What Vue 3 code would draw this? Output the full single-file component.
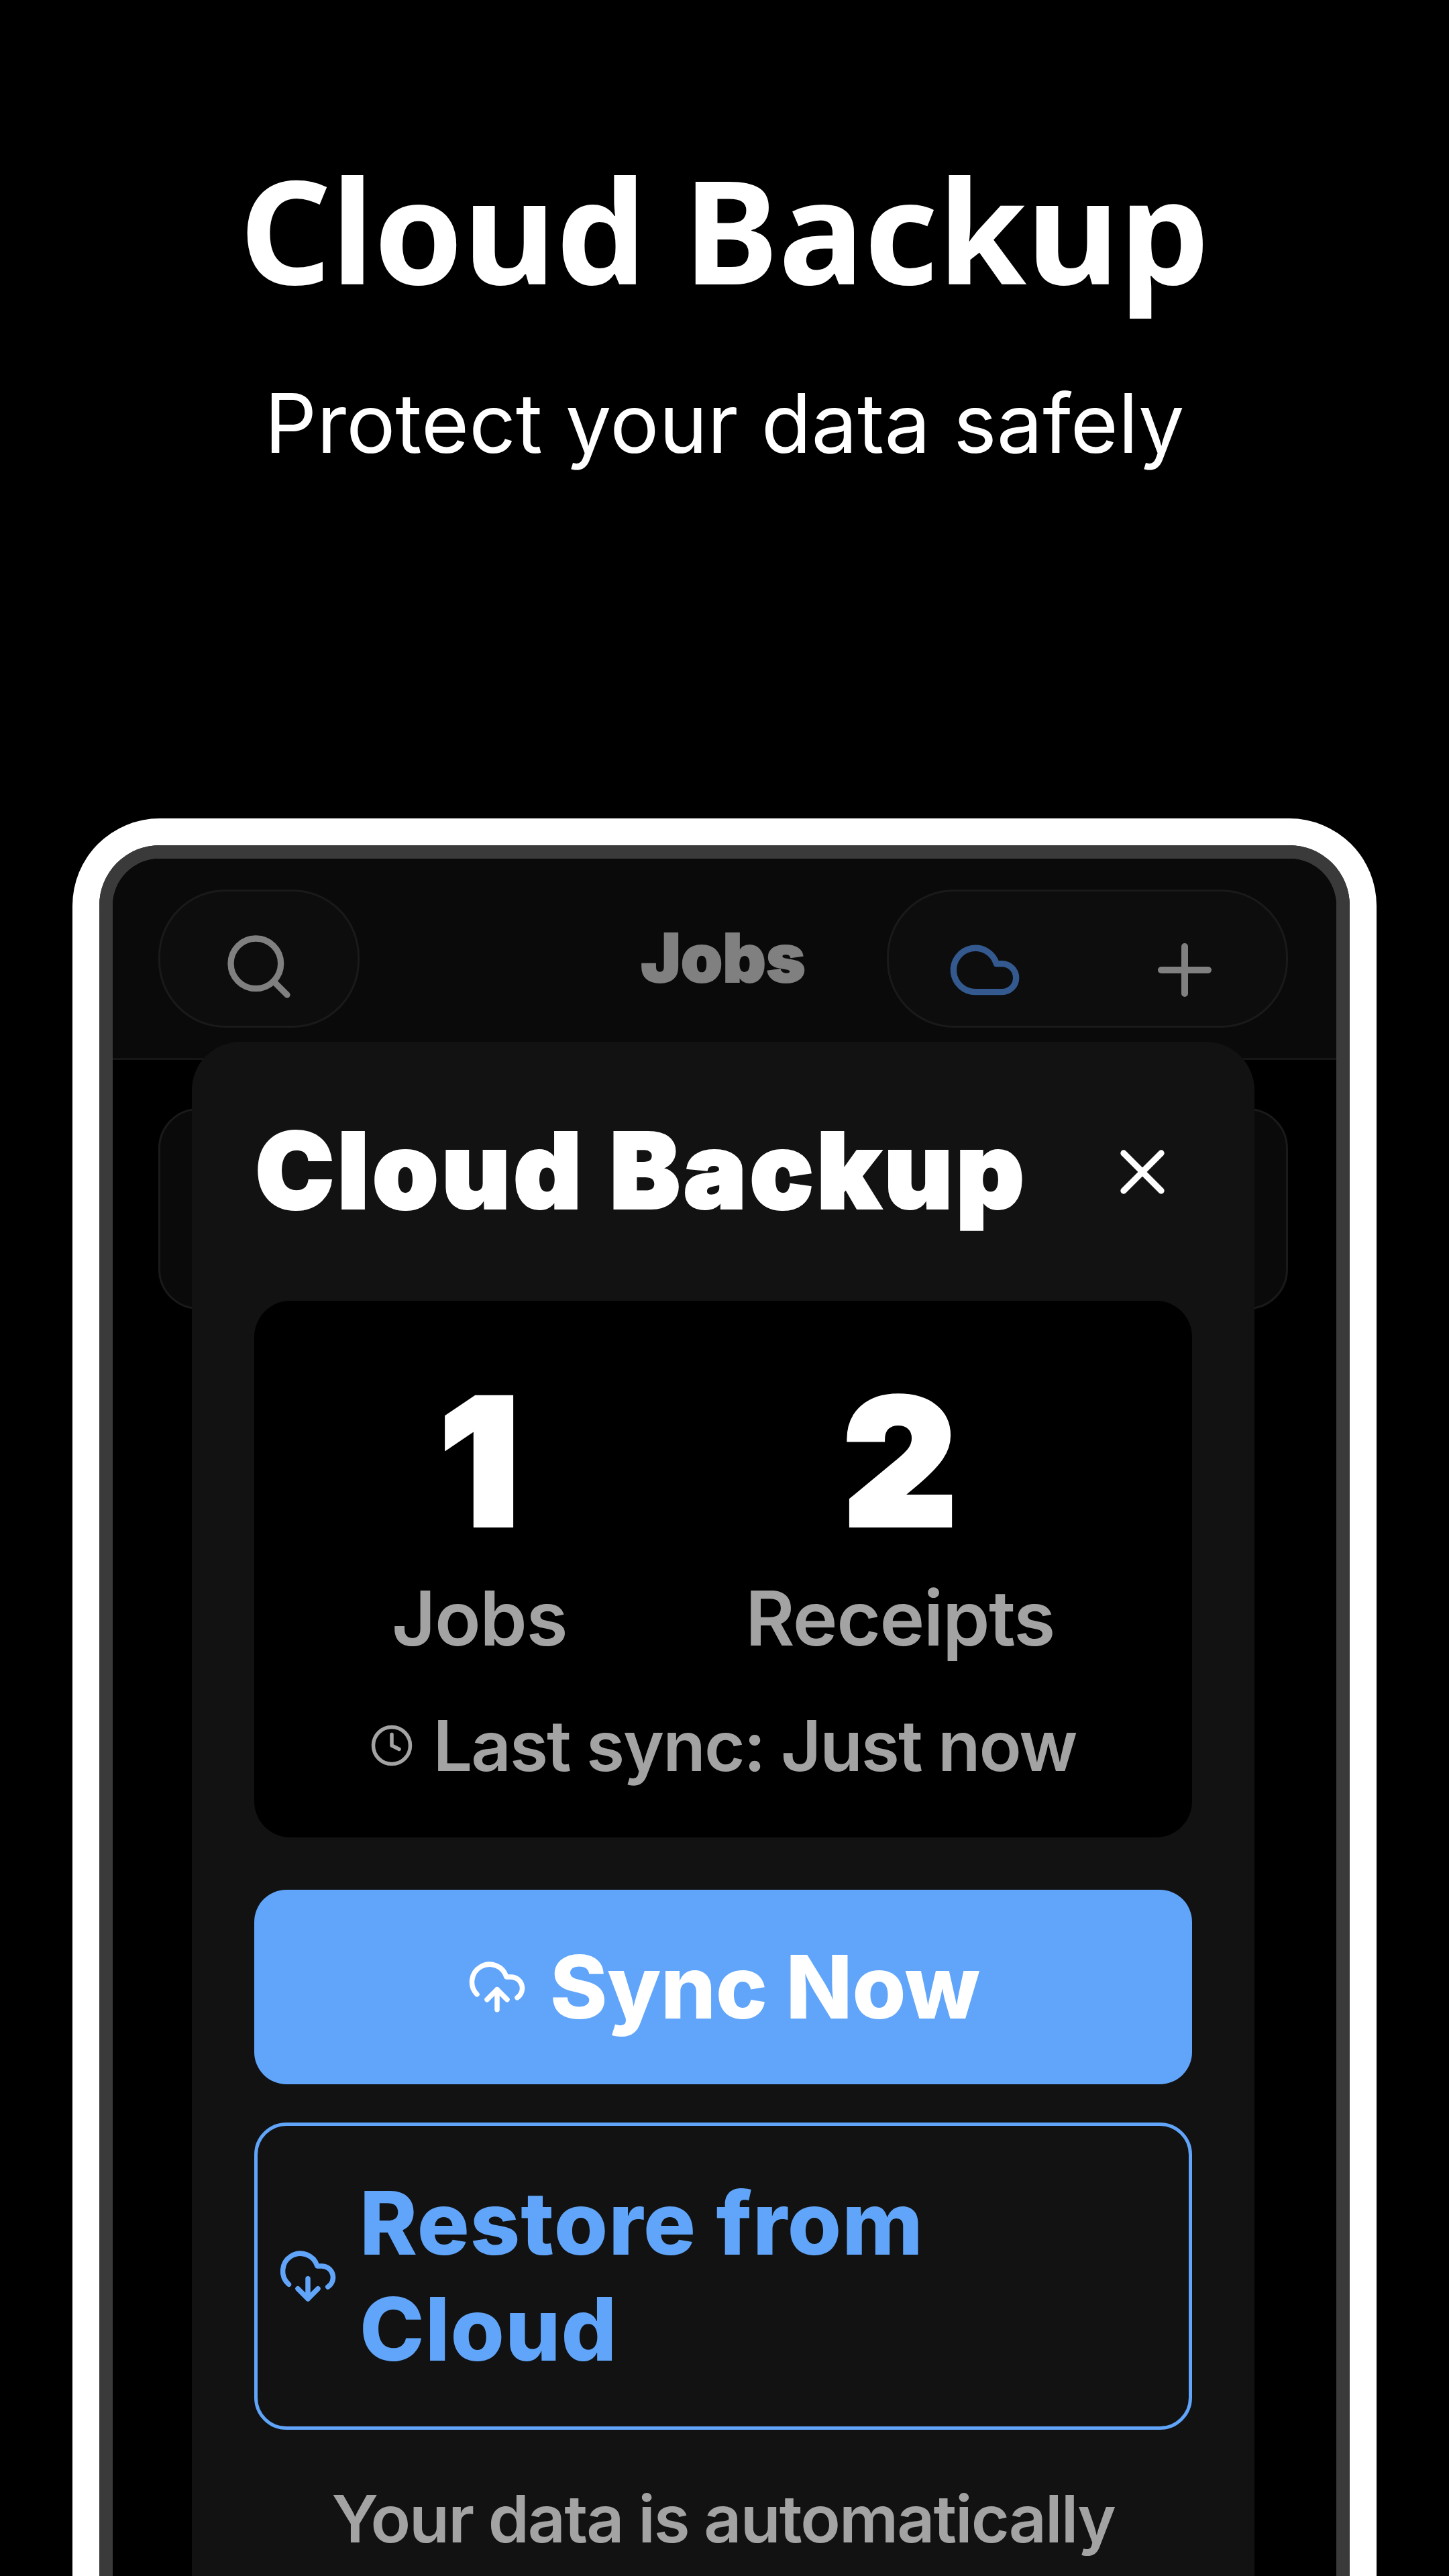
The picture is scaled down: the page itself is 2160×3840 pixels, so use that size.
<script setup>
const stats = [
  { value: 1, label: 'Jobs' },
  { value: 2, label: 'Receipts' },
]
</script>

<template>
  <main class="page">
    <header class="hero">
      <h1 class="hero-title">Cloud Backup</h1>
      <p class="hero-sub">Protect your data safely</p>
    </header>

    <section class="frame">
      <div class="screen">
        <div class="app-bar">
          <button class="round search">
            <svg class="i112" viewBox="0 0 24 24"><path d="m21 21-4.34-4.34"/><circle cx="11" cy="11" r="8"/></svg>
          </button>
          <span class="app-title">Jobs</span>
          <div class="round actions">
            <svg class="i112 cloud" viewBox="0 0 24 24"><path d="M17.5 19H9a7 7 0 1 1 6.71-9h1.79a4.5 4.5 0 1 1 0 9Z"/></svg>
            <svg class="i120" viewBox="0 0 24 24"><path d="M5 12h14"/><path d="M12 5v14"/></svg>
          </div>
        </div>
        <div class="list">
          <div class="job-card"></div>
        </div>

        <div class="modal">
          <div class="modal-head">
            <h2 class="modal-title">Cloud Backup</h2>
            <svg class="i112 close" viewBox="0 0 24 24"><path d="M18 6 6 18"/><path d="m6 6 12 12"/></svg>
          </div>

          <div class="stats">
            <div class="stat-row">
              <div v-for="s in stats" :key="s.label" class="stat">
                <div class="stat-value">{{ s.value }}</div>
                <div class="stat-label">{{ s.label }}</div>
              </div>
            </div>
            <div class="last-sync">
              <svg class="clock" viewBox="0 0 24 24"><circle cx="12" cy="12" r="10"/><path d="M12 6v6l4 2"/></svg>
              <span>Last sync: Just now</span>
            </div>
          </div>

          <button class="btn primary">
            <svg class="btn-icon" viewBox="0 0 24 24"><path d="M12 13v8"/><path d="M4 14.899A7 7 0 1 1 15.71 8h1.79a4.5 4.5 0 0 1 2.5 8.242"/><path d="m8 17 4-4 4 4"/></svg>
            <span>Sync Now</span>
          </button>

          <button class="btn outline">
            <svg class="btn-icon" viewBox="0 0 24 24"><path d="M12 13v8l-4-4"/><path d="m12 21 4-4"/><path d="M4.393 15.269A7 7 0 1 1 15.71 8h1.79a4.5 4.5 0 0 1 2.436 8.284"/></svg>
            <span class="outline-text">Restore from Cloud</span>
          </button>

          <p class="note">Your data is automatically backed up to the cloud</p>
        </div>
      </div>
    </section>
  </main>
</template>

<style scoped>
.page {
  width: 2160px;
  height: 3840px;
  background: #000;
  overflow: hidden;
  font-family: Inter, "Liberation Sans", sans-serif;
  color: #fff;
}
.hero {
  padding-top: 211px;
  text-align: center;
}
.hero-title {
  margin: 0;
  font-family: "Noto Sans", sans-serif;
  font-weight: 700;
  font-size: 213px;
  line-height: 260px;
}
.hero-sub {
  margin: 87px 0 0;
  font-size: 122px;
  line-height: 146px;
  font-weight: 400;
}
.frame {
  width: 1944px;
  height: 2620px;
  margin: 516px auto 0;
  box-sizing: border-box;
  border: 40px solid #fff;
  border-bottom: 0;
  border-radius: 130px 130px 0 0;
}
.screen {
  position: relative;
  height: 100%;
  box-sizing: border-box;
  border: 20px solid #3a3a3a;
  border-bottom: 0;
  border-radius: 90px 90px 0 0;
  background: #000;
  overflow: hidden;
}
svg {
  display: block;
  fill: none;
  stroke: currentColor;
  stroke-width: 2;
  stroke-linecap: round;
  stroke-linejoin: round;
  flex: none;
}
.i112 { width: 112px; height: 112px; }
.i120 { width: 120px; height: 120px; }
.app-bar {
  height: 300px;
  box-sizing: border-box;
  padding: 46px 72px 0 68px;
  display: grid;
  grid-template-columns: 1fr auto 1fr;
  align-items: start;
  background: #0a0a0a;
  border-bottom: 3px solid #161616;
  color: #808080;
}
.round {
  height: 206px;
  box-sizing: border-box;
  border: 3px solid #1a1a1a;
  border-radius: 100px;
  background: #0d0d0d;
  padding: 0;
  color: inherit;
}
.search {
  width: 300px;
  display: flex;
  align-items: center;
  justify-content: center;
  padding-top: 24px;
}
.actions {
  width: 598px;
  justify-self: end;
  display: flex;
  align-items: center;
  justify-content: space-between;
  padding: 34px 91px 0 87px;
}
.cloud { color: #33598e; }
.app-title {
  margin-top: 44px;
  font-size: 100px;
  line-height: 116px;
  font-weight: 900;
  -webkit-text-stroke: 2px currentColor;
}
.list { padding: 72px 72px 0 68px; }
.job-card {
  height: 300px;
  box-sizing: border-box;
  border: 3px solid #1a1a1a;
  border-radius: 60px;
  background: #0a0a0a;
}
.modal {
  position: absolute;
  left: 118px;
  top: 273px;
  width: 1584px;
  height: 2400px;
  box-sizing: border-box;
  padding: 96px 93px 0;
  background: #121212;
  border-radius: 72px;
}
.modal-head {
  display: flex;
  align-items: center;
  justify-content: space-between;
  margin-bottom: 98px;
}
.modal-title {
  margin: 0 0 0 2px;
  font-size: 156px;
  line-height: 192px;
  font-weight: 900;
  letter-spacing: 5.8px;
  -webkit-text-stroke: 4px currentColor;
}
.close { margin: 4px 18px 0 0; color: #fff; }
.stats {
  height: 800px;
  box-sizing: border-box;
  padding: 71px 72px 0;
  background: #000;
  border-radius: 54px;
}
.stat-row {
  display: flex;
  justify-content: space-around;
}
.stat { text-align: center; }
.stat-value {
  font-size: 260px;
  line-height: 337px;
  font-weight: 900;
  -webkit-text-stroke: 8px currentColor;
}
.stat-label {
  font-size: 113px;
  line-height: 130px;
  font-weight: 600;
  letter-spacing: -1.5px;
  color: #a3a3a3;
}
.last-sync {
  margin-top: 64px;
  display: flex;
  align-items: center;
  justify-content: center;
  gap: 28px;
  font-size: 104px;
  line-height: 122px;
  font-weight: 600;
  letter-spacing: -2px;
  color: #a3a3a3;
}
.clock { width: 66px; height: 66px; }
.btn {
  width: 100%;
  display: flex;
  align-items: center;
  box-sizing: border-box;
  border-radius: 48px;
  font-family: inherit;
  font-size: 130px;
  font-weight: 800;
  line-height: 158px;
  gap: 34px;
}
.btn-icon { width: 90px; height: 90px; }
.primary {
  margin-top: 78px;
  height: 290px;
  justify-content: center;
  background: #60a5fa;
  border: 0;
  color: #fff;
  letter-spacing: -0.6px;
}
.outline {
  margin-top: 57px;
  height: 458px;
  padding: 0 30px;
  background: transparent;
  border: 5px solid #60a5fa;
  color: #60a5fa;
  text-align: left;
  gap: 32px;
  letter-spacing: 1px;
}
.outline-text { width: 1000px; }
.note {
  margin: 58px 0 0;
  text-align: center;
  font-size: 98px;
  line-height: 150px;
  font-weight: 600;
  letter-spacing: -2px;
  color: #a3a3a3;
}
</style>

<style>
html, body { background: #000; }
</style>
